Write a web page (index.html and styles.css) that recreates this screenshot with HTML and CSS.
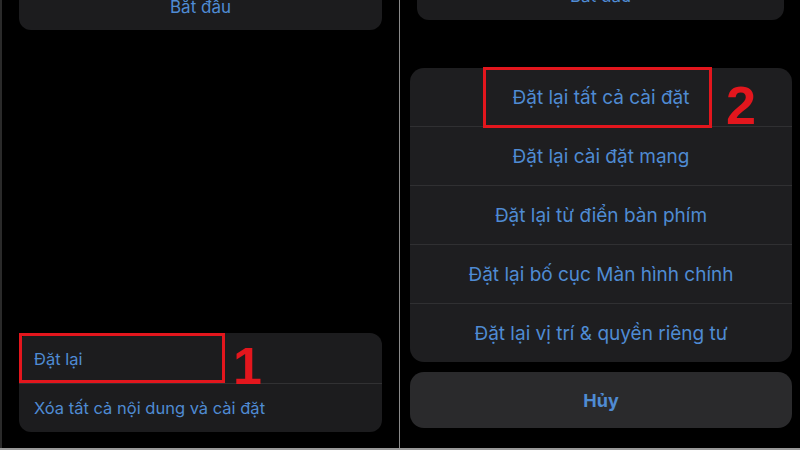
FILE: index.html
```html
<!DOCTYPE html>
<html lang="vi">
<head>
<meta charset="utf-8">
<link rel="stylesheet" href="styles.css">
</head>
<body>
<div class="screen">
  <section class="panel left">
    <div class="top-card"><span>Bắt đầu</span></div>
    <div class="list-card">
      <div class="list-row">Đặt lại</div>
      <div class="list-row">Xóa tất cả nội dung và cài đặt</div>
      <div class="mark mark-1"></div>
      <div class="num num-1">1</div>
    </div>
  </section>
  <div class="divider"></div>
  <section class="panel right">
    <div class="top-card small"><span>Bắt đầu</span></div>
    <div class="sheet">
      <div class="sheet-group">
        <div class="sheet-row">Đặt lại tất cả cài đặt</div>
        <div class="sheet-row">Đặt lại cài đặt mạng</div>
        <div class="sheet-row">Đặt lại từ điển bàn phím</div>
        <div class="sheet-row">Đặt lại bố cục Màn hình chính</div>
        <div class="sheet-row">Đặt lại vị trí &amp; quyền riêng tư</div>
      </div>
      <div class="cancel">Hủy</div>
      <div class="mark mark-2"></div>
      <div class="num num-2">2</div>
    </div>
  </section>
</div>
</body>
</html>
```

FILE: styles.css
```css
* { box-sizing: border-box; }
html, body { margin: 0; padding: 0; background: #000; }
body {
  width: 800px;
  height: 450px;
  overflow: hidden;
  font-family: "Inter", "Noto Sans", sans-serif;
  color: #4f8bd3;
}
.screen {
  display: flex;
  width: 800px;
  height: 450px;
  border-bottom: 2px solid #9a9a9a;
}
.divider { width: 1px; background: #8a8a8a; }
.panel {
  height: 448px;
  display: flex;
  flex-direction: column;
  position: relative;
}
.left {
  width: 399px;
  padding: 0 17px 16px 19px;
  border-left: 2px solid #2a2a2a;
  justify-content: space-between;
}
.left .top-card { margin-left: -2px; }
.right {
  width: 400px;
  padding: 0 8px 0 10px;
}
.top-card {
  height: 30px;
  background: #1c1c1e;
  border-radius: 0 0 12px 12px;
  display: flex;
  justify-content: center;
  align-items: flex-start;
  font-size: 17px;
}
.top-card span { line-height: 16px; margin-top: -1px; }
.top-card.small {
  height: 20px;
  margin: 0 8px 0 7px;
}
.top-card.small span { margin-top: -12px; }

.list-card {
  position: relative;
  background: #1c1c1e;
  border-radius: 12px;
  margin-left: -2px;
  width: 363px;
}
.list-row {
  height: 50px;
  display: flex;
  align-items: center;
  padding-left: 15px;
  font-size: 16.5px;
  padding-top: 2px;
}
.list-row + .list-row {
  height: 49px;
  border-top: 1px solid #313133;
  padding-top: 0;
}

.sheet {
  position: relative;
  margin-top: 48px;
}
.sheet-group {
  background: #1e1e20;
  border-radius: 14px;
  overflow: hidden;
}
.sheet-row {
  height: 59px;
  display: flex;
  align-items: center;
  justify-content: center;
  font-size: 19px;
  border-top: 1px solid #303032;
}
.sheet-row:first-child { border-top: none; height: 58px; }
.cancel {
  margin-top: 10px;
  height: 56px;
  background: #2a2a2c;
  border-radius: 14px;
  display: flex;
  align-items: center;
  justify-content: center;
  font-size: 18px;
  font-weight: 700;
}

.mark {
  position: absolute;
  border: 3px solid #e3161d;
}
.mark-1 { left: 0; top: 0; width: 206px; height: 50px; }
.mark-2 { left: 73px; top: -1px; width: 229px; height: 61px; }
.num {
  position: absolute;
  color: #e3161d;
  font-family: "Liberation Sans", Arial, sans-serif;
  font-weight: 700;
  line-height: 1;
}
.num-1 { left: 214px; top: 7px; font-size: 52px; }
.num-2 { left: 316px; top: 10px; font-size: 54px; }
```
